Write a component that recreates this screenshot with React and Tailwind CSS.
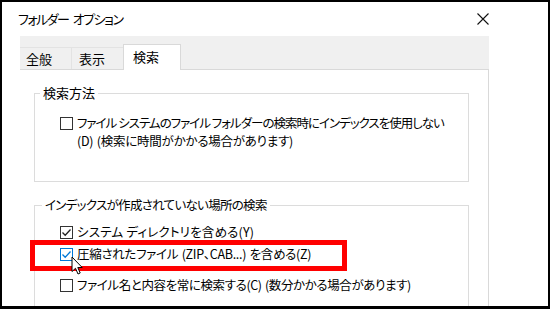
import React from "react";

function Box({ checked, hover }) {
  return (
    <span
      className={`relative inline-flex h-[13px] w-[13px] shrink-0 items-center justify-center border bg-white ${
        hover ? "border-[#0078d7]" : "border-[#333]"
      }`}
    >
      {checked && (
        <svg width="11" height="11" viewBox="0 0 11 11" className="block">
          <polyline
            points="1.5,5.5 4.2,8.3 9.5,2.5"
            fill="none"
            stroke={hover ? "#0078d7" : "#222"}
            strokeWidth="1.3"
          />
        </svg>
      )}
    </span>
  );
}

function Row({ checked, hover, children, className = "" }) {
  return (
    <div className={`flex items-start pl-[25px] ${className}`}>
      <span className="flex h-[18px] items-center">
        <Box checked={checked} hover={hover} />
      </span>
      <div className="ml-[4px] whitespace-nowrap leading-[18px]">{children}</div>
    </div>
  );
}

export default function App() {
  return (
    <div className="relative h-[309px] w-[550px] overflow-hidden border-t-2 border-l-2 border-r-2 border-b-3 border-black bg-white text-[12.5px] text-black [font-family:'Noto_Sans_CJK_JP',sans-serif] [font-feature-settings:'palt']">
      {/* title bar */}
      <div className="flex h-[34px] items-center justify-between pl-[16px] pr-[59px]">
        <span className="text-[13px] tracking-[-1.5px] [word-spacing:3px]">フォルダー オプション</span>
        <svg width="12" height="12" viewBox="0 0 12 12">
          <path d="M0.5 0.5L11.5 11.5M11.5 0.5L0.5 11.5" stroke="#111" strokeWidth="1.1" />
        </svg>
      </div>

      <div className="ml-[18px] w-[469px]">
        {/* tabs */}
        <div className="flex h-[34px] items-end border-b border-[#d9d9d9] bg-[#f0f0f0] text-[13px]">
          <div className="flex h-[22px] w-[52px] items-center border-t border-r border-[#e3e3e3] pl-[6px]">全般</div>
          <div className="flex h-[22px] w-[51px] items-center border-t border-[#e3e3e3] pl-[7px]">表示</div>
          <div className="-mb-px flex h-[26px] w-[58px] items-center border-x border-t border-[#d9d9d9] bg-white pb-[2px] pl-[9px]">検索</div>
        </div>

        {/* panel */}
        <div className="h-[240px] border-r border-[#d9d9d9] bg-white pl-[14px] pr-[19px] pt-[14px]">
          <fieldset className="border border-[#dcdcdc] pb-[31px]">
            <legend className="ml-[5px] px-[3px] text-[13px] leading-[18px]">検索方法</legend>
            <Row className="pt-[12px]" checked={false}>
              <div className="tracking-[-1px]">ファイル システムのファイル フォルダーの検索時にインデックスを使用しない</div>
              <div className="tracking-[-0.25px] [word-spacing:1px]">(D) (検索に時間がかかる場合があります)</div>
            </Row>
          </fieldset>

          <fieldset className="mt-[14px] h-[140px] border border-[#dcdcdc]">
            <legend className="ml-[7px] px-[3px] leading-[18px] tracking-[-0.7px]">インデックスが作成されていない場所の検索</legend>
            <Row className="pt-[9px]" checked>
              <div className="tracking-[0.2px]">システム ディレクトリを含める(Y)</div>
            </Row>
            <Row className="mt-[4px]" checked hover>
              <div className="tracking-[-0.3px] [word-spacing:1px]">圧縮されたファイル (ZIP、CAB...) を含める(Z)</div>
            </Row>
            <Row className="mt-[13px]" checked={false}>
              <div className="tracking-[-0.4px] [word-spacing:1px]">ファイル名と内容を常に検索する(C) (数分かかる場合があります)</div>
            </Row>
          </fieldset>
        </div>
      </div>

      {/* red highlight */}
      <div className="pointer-events-none absolute left-[28px] top-[238px] h-[31px] w-[317px] border-[5px] border-[#f00]" />

      {/* mouse cursor */}
      <svg className="absolute left-[69px] top-[254px]" width="13" height="20" viewBox="0 0 13 20">
        <path
          d="M1 1 L1 15.5 L4.5 12.3 L7 18 L9.2 17 L6.8 11.5 L11.2 11.5 Z"
          fill="#fff"
          stroke="#000"
          strokeWidth="1"
          strokeLinejoin="round"
        />
      </svg>
    </div>
  );
}
